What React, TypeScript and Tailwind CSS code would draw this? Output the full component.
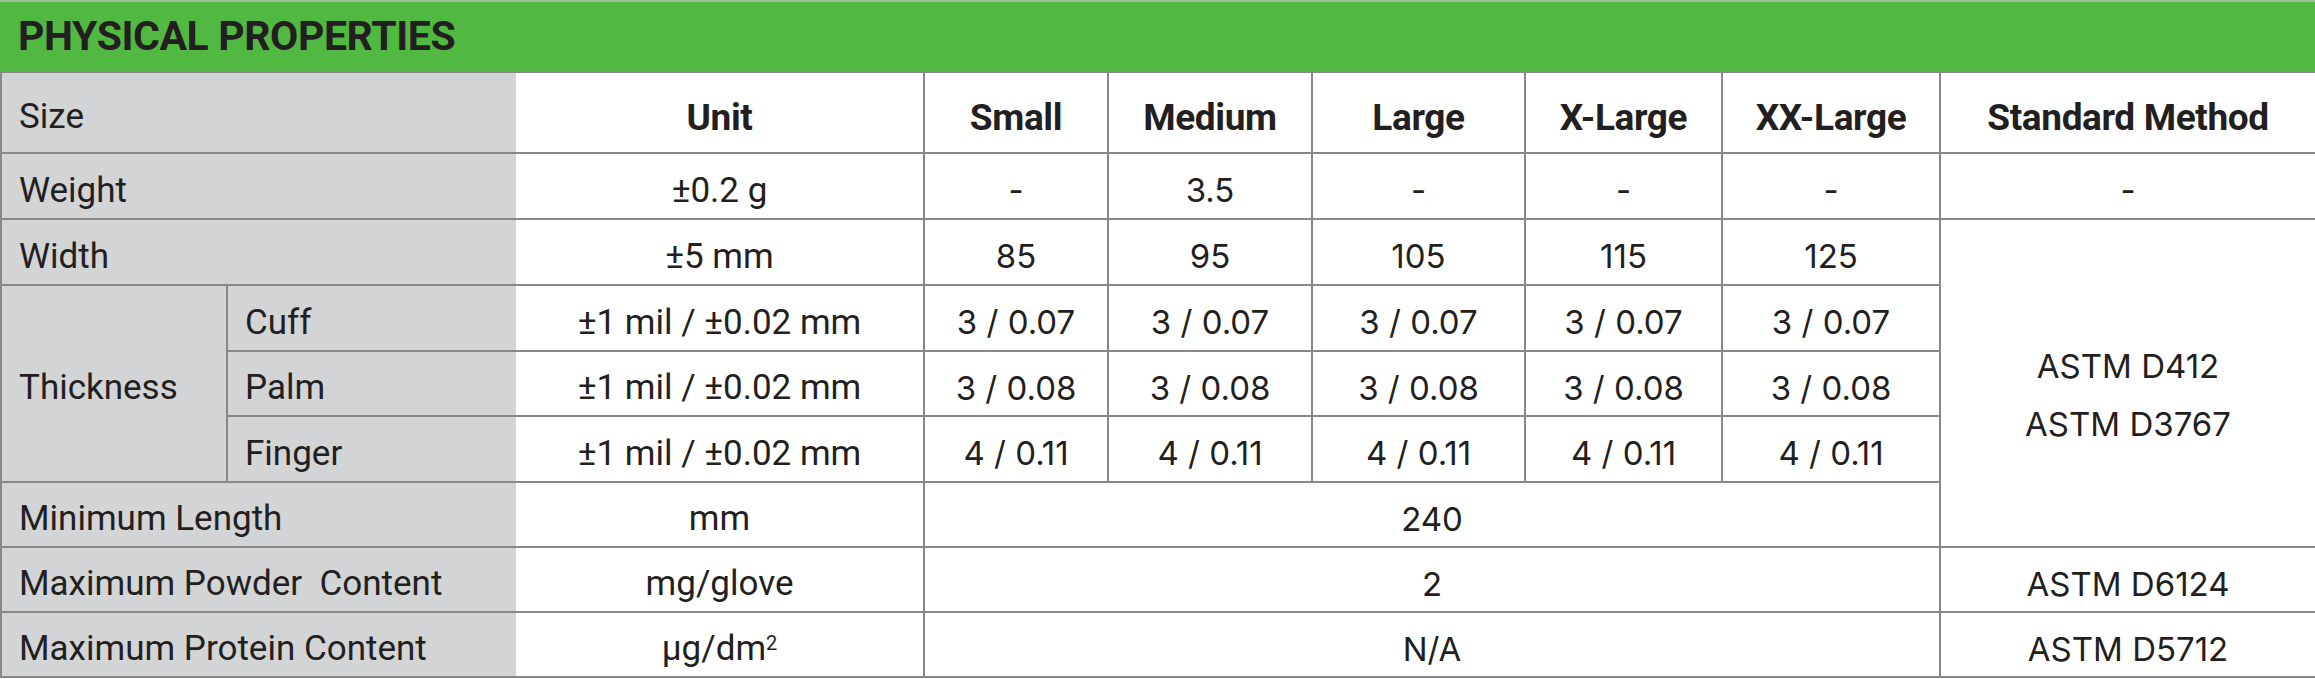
import React from "react";

const gray = "bg-[#d3d4d6] text-left pl-[17px] pt-[10px] font-['Roboto'] text-[35px] font-normal text-[#231f20] border-2 border-[#888888] border-r-0";
const grayMid = "bg-[#d3d4d6] text-left pl-[17px] pt-[10px] font-['Roboto'] text-[35px] font-normal text-[#231f20] border-2 border-[#888888]";
const unit = "bg-white text-center pt-[10px] font-['Roboto'] text-[35px] font-normal text-[#231f20] border-2 border-[#888888] border-l-0";
const data = "bg-white text-center pt-[10px] font-['Inter'] text-[33px] font-normal text-[#231f20] border-2 border-[#888888]";
const astm = "bg-white text-center pt-[24px] leading-[58px] font-['Inter'] text-[33px] font-normal text-[#231f20] border-2 border-[#888888]";
const head = "bg-white text-center pt-[10px] font-['Roboto'] text-[37px] font-bold tracking-[-0.01em] text-[#231f20] border-2 border-[#888888]";

export default function App() {
  const thick = [
    { name: "Cuff", vals: ["3 / 0.07", "3 / 0.07", "3 / 0.07", "3 / 0.07", "3 / 0.07"] },
    { name: "Palm", vals: ["3 / 0.08", "3 / 0.08", "3 / 0.08", "3 / 0.08", "3 / 0.08"] },
    { name: "Finger", vals: ["4 / 0.11", "4 / 0.11", "4 / 0.11", "4 / 0.11", "4 / 0.11"] },
  ];
  return (
    <div className="w-[2315px] bg-white">
      <div className="h-[71px] bg-[#51b941] border-t-2 border-[#9fbf98] flex items-center pl-[18px]">
        <span className="font-['Roboto'] font-bold text-[41px] text-[#231f20] tracking-[-0.01em]">PHYSICAL PROPERTIES</span>
      </div>
      <table className="w-[2315px] table-fixed border-collapse">
        <colgroup>
          <col className="w-[226px]" />
          <col className="w-[289px]" />
          <col className="w-[408px]" />
          <col className="w-[184px]" />
          <col className="w-[204px]" />
          <col className="w-[213px]" />
          <col className="w-[197px]" />
          <col className="w-[218px]" />
          <col className="w-[376px]" />
        </colgroup>
        <tbody>
          <tr className="h-[81px]">
            <td colSpan={2} className={gray}>Size</td>
            <td className={head + " border-l-0"}>Unit</td>
            <td className={head}>Small</td>
            <td className={head}>Medium</td>
            <td className={head}>Large</td>
            <td className={head}>X-Large</td>
            <td className={head}>XX-Large</td>
            <td className={head}>Standard Method</td>
          </tr>
          <tr className="h-[66px]">
            <td colSpan={2} className={gray}>Weight</td>
            <td className={unit}>±0.2 g</td>
            <td className={data}>-</td>
            <td className={data}>3.5</td>
            <td className={data}>-</td>
            <td className={data}>-</td>
            <td className={data}>-</td>
            <td className={data}>-</td>
          </tr>
          <tr className="h-[66px]">
            <td colSpan={2} className={gray}>Width</td>
            <td className={unit}>±5 mm</td>
            <td className={data}>85</td>
            <td className={data}>95</td>
            <td className={data}>105</td>
            <td className={data}>115</td>
            <td className={data}>125</td>
            <td rowSpan={5} className={astm}>
              ASTM D412
              <br />
              ASTM D3767
            </td>
          </tr>
          {thick.map((t, i) => (
            <tr key={t.name} className={i === 1 ? "h-[65px]" : "h-[66px]"}>
              {i === 0 && (
                <td rowSpan={3} className={grayMid}>Thickness</td>
              )}
              <td className={gray}>{t.name}</td>
              <td className={unit}>±1 mil / ±0.02 mm</td>
              {t.vals.map((v, j) => (
                <td key={j} className={data}>{v}</td>
              ))}
            </tr>
          ))}
          <tr className="h-[65px]">
            <td colSpan={2} className={gray}>Minimum Length</td>
            <td className={unit}>mm</td>
            <td colSpan={5} className={data}>240</td>
          </tr>
          <tr className="h-[65px]">
            <td colSpan={2} className={gray}>Maximum Powder&nbsp; Content</td>
            <td className={unit}>mg/glove</td>
            <td colSpan={5} className={data}>2</td>
            <td className={data}>ASTM D6124</td>
          </tr>
          <tr className="h-[65px]">
            <td colSpan={2} className={gray}>Maximum Protein Content</td>
            <td className={unit}>
              µg/dm<sup className="text-[20px]">2</sup>
            </td>
            <td colSpan={5} className={data}>N/A</td>
            <td className={data}>ASTM D5712</td>
          </tr>
        </tbody>
      </table>
    </div>
  );
}
